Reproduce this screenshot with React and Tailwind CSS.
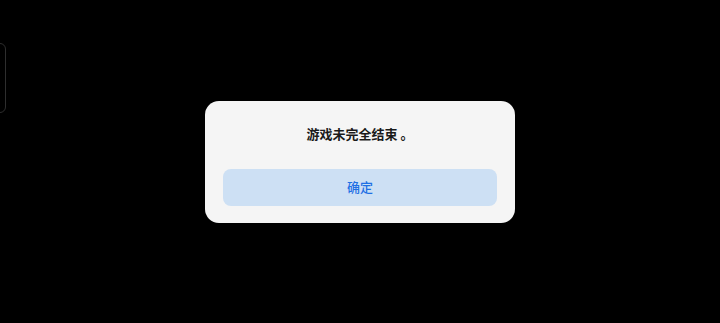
export default function App() {
  return (
    <div
      className="relative w-[720px] h-[323px] bg-black flex items-center justify-center overflow-hidden"
      style={{ fontFamily: '"Noto Sans CJK SC", "Noto Sans", sans-serif' }}
    >
      <div className="absolute left-[-20px] top-[43px] w-[26px] h-[70px] rounded-[6px] border border-[#2e2e2e]" />
      <div className="w-[310px] h-[122px] bg-[#f5f5f5] rounded-[14px] flex flex-col items-center px-[18px] pt-[22px]">
        <div className="text-[13px] leading-[22px] font-semibold text-[#1a1a1a]">
          游戏未完全结束 。
        </div>
        <button className="mt-[24px] w-full h-[37px] rounded-[8px] bg-[#cde0f4] text-[13px] text-[#1f70e4] font-medium">
          确定
        </button>
      </div>
    </div>
  );
}
